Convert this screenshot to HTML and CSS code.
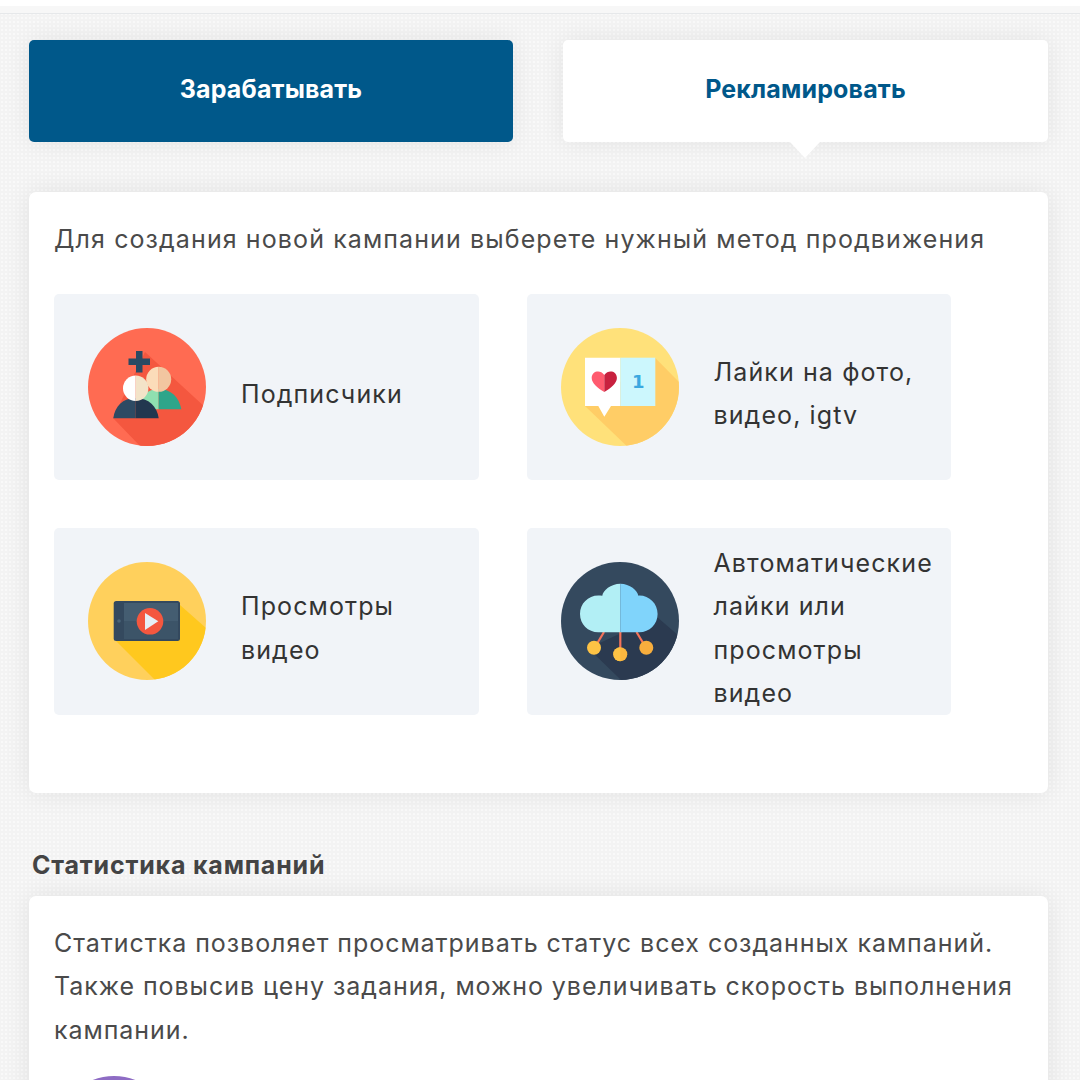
FILE: index.html
```html
<!DOCTYPE html>
<html lang="ru">
<head>
<meta charset="utf-8">
<title>Кампании</title>
<link rel="stylesheet" href="styles.css">
</head>
<body>
<div class="topbar"></div>
<main class="page">
  <nav class="tabs">
    <a class="tab tab-dark">Зарабатывать</a>
    <a class="tab tab-light">Рекламировать</a>
  </nav>
  <section class="card card-methods">
    <p class="lead">Для создания новой кампании выберете нужный метод продвижения</p>
    <div class="tiles">
      <div class="tile">
        <svg class="icon" viewBox="0 0 118 118">
          <defs><clipPath id="c1"><circle cx="59" cy="59" r="59"/></clipPath></defs>
          <circle cx="59" cy="59" r="59" fill="#ff6b52"/>
          <path clip-path="url(#c1)" fill="#f4573f" d="M57 24 L118 80 V118 H52 L25 90Z"/>
          <path fill="#2b4a63" d="M48 23h6.500v7.500h7.500v6.500h-7.500v7.500h-6.500v-7.500h-7.500v-6.500h7.500z"/>
          <path fill="#8fe0b0" d="M70.700 61c-12 0-20 8-22 20.300h22z"/>
          <path fill="#2ea58a" d="M70.700 61c12 0 20.500 8 22.600 20.300H70.700z"/>
          <path fill="#fbdcb9" d="M70.700 38.800a12.500 12.500 0 0 0 0 25z"/>
          <path fill="#f2c6a0" d="M70.700 38.800a12.500 12.500 0 0 1 0 25z"/>
          <path fill="#2d4a63" d="M47.700 70c-13 0-21 8.500-22.400 20.300h22.400z"/>
          <path fill="#22374f" d="M47.700 70c13 0 21.500 8.500 23 20.300h-23z"/>
          <path fill="#fff" d="M47.700 47.600a12.700 12.700 0 0 0 0 25.400z"/>
          <path fill="#f3e3c8" d="M47.700 47.600a12.700 12.700 0 0 1 0 25.400z"/>
        </svg>
        <span class="tile-text">Подписчики</span>
      </div>
      <div class="tile">
        <svg class="icon" viewBox="0 0 118 118">
          <defs><clipPath id="c2"><circle cx="59" cy="59" r="59"/></clipPath></defs>
          <circle cx="59" cy="59" r="59" fill="#ffe17a"/>
          <path clip-path="url(#c2)" fill="#ffcd66" d="M94.300 30 L118 54 V118 H65.700 L24 78Z"/>
          <path fill="#fff" d="M24 29.700h35.300V78H50l-6.700 10.700L37.300 78H24z"/>
          <rect x="59.300" y="29.700" width="35" height="48.300" fill="#ccf7fd"/>
          <path fill="#ff5b6f" d="M43.300 47c-2-3-5-4-7.500-3.500-3.200.6-5.100 3.400-5.100 6.500 0 5 6 10.500 12.600 14z"/>
          <path fill="#c8213f" d="M43.300 47c2-3 5-4 7.500-3.500 3.200.6 5.100 3.400 5.100 6.500 0 5-6 10.500-12.600 14z"/>
          <text class="icon-one" x="71" y="60">1</text>
        </svg>
        <span class="tile-text">Лайки на фото, видео, igtv</span>
      </div>
      <div class="tile">
        <svg class="icon" viewBox="0 0 118 118">
          <defs><clipPath id="c3"><circle cx="59" cy="59" r="59"/></clipPath></defs>
          <circle cx="59" cy="59" r="59" fill="#ffd05c"/>
          <path clip-path="url(#c3)" fill="#ffc81e" d="M92 43 L118 66 V118 H67 L28 79Z"/>
          <rect x="25.700" y="39" width="66.300" height="40" rx="2.500" fill="#34495e"/>
          <rect x="36" y="41" width="54" height="18" fill="#445d71"/>
          <rect x="36" y="59" width="54" height="18" fill="#3c5468"/>
          <circle cx="31" cy="59" r="1.800" fill="#4a6478"/>
          <circle cx="62" cy="59.300" r="13.300" fill="#f4573f"/>
          <path fill="#e6f0f6" d="M57 51l13.300 8.300L57 68z"/>
        </svg>
        <span class="tile-text">Просмотры видео</span>
      </div>
      <div class="tile">
        <svg class="icon" viewBox="0 0 118 118">
          <defs><clipPath id="c4"><circle cx="59" cy="59" r="59"/></clipPath></defs>
          <circle cx="59" cy="59" r="59" fill="#34495e"/>
          <path clip-path="url(#c4)" fill="#2b3a50" d="M95.700 54.700 L118 74 V118 H60 L27.300 86.300Z"/>
          <g stroke="#f5735a" stroke-width="2.200" fill="none">
            <path d="M43 70 34 85"/><path d="M59.300 70v22"/><path d="M75.500 70l9 15"/>
          </g>
          <circle cx="33" cy="85.700" r="7" fill="#fdc345"/>
          <circle cx="59.300" cy="92.300" r="7" fill="#fbb73f"/>
          <circle cx="85.300" cy="85.700" r="7" fill="#f8ae3d"/>
          <path fill="#fdc345" d="M59.300 85.300a7 7 0 0 0 0 14z"/>
          <path fill="#b2eff5" d="M59.300 21.700c-9.500 0-17.400 6.900-18 12-1.200 0-2.700-.1-4-.1C27 33.600 19 41.800 19 52s8 18.300 18.300 18.300h22z"/>
          <path fill="#80d4fb" d="M59.300 21.700c9.500 0 17.400 6.900 18 12 .4 0 .7-.1 1-.1 10.200 0 18.300 8.200 18.300 18.400S88.500 70.300 78.300 70.300h-19z"/>
        </svg>
        <span class="tile-text">Автоматические лайки или просмотры видео</span>
      </div>
    </div>
  </section>
  <h2 class="section-title">Статистика кампаний</h2>
  <section class="card card-stats">
    <p class="stats-text">Статистка позволяет просматривать статус всех созданных кампаний. Также повысив цену задания, можно увеличивать скорость выполнения кампании.</p>
    <div class="stats-icon"></div>
  </section>
</main>
</body>
</html>
```

FILE: styles.css
```css
* { box-sizing: border-box; }
html, body { height: 100%; }
body {
  margin: 0;
  overflow: hidden;
  font-family: "Inter", "Open Sans", sans-serif;
  font-size: 25px;
  line-height: 43.5px;
  letter-spacing: 1px;
  color: #4a4a4a;
  background-color: #f3f3f3;
  background-image:
    radial-gradient(circle at 2px 2px, #f9f9f9 1px, transparent 1.4px);
  background-size: 4px 4px;
}
.topbar {
  height: 14px;
  background: linear-gradient(#fff 0, #fff 6px, #f7f7f7 6px, #f7f7f7 13px, #e6e8ea 13px);
}
.page { padding: 26px 32px 0 29px; }
.tabs {
  display: grid;
  grid-template-columns: 484px 485px;
  gap: 50px;
  margin-bottom: 50.5px;
}
.tab {
  display: flex;
  align-items: center;
  justify-content: center;
  height: 101.5px;
  padding-bottom: 2px;
  border-radius: 5px;
  font-size: 25px;
  font-weight: 700;
  letter-spacing: 0.15px;
  box-shadow: 0 0 26px rgba(0, 0, 0, 0.07);
}
.tab-dark { background: #00588a; color: #fff; }
.tab-light { position: relative; background: #fff; color: #00588a; }
.tab-light::after {
  content: "";
  position: absolute;
  left: 227px;
  top: 100%;
  border-style: solid;
  border-width: 16px 15px 0;
  border-color: #fff transparent transparent;
}
.card {
  background: #fff;
  border-radius: 7px;
  box-shadow: 0 0 26px rgba(0, 0, 0, 0.08);
  padding: 26px 25px 25px;
}
.card-methods { height: 601px; }
.lead { margin: 0 0 32px; white-space: nowrap; letter-spacing: 1.1px; }
.tiles {
  display: grid;
  grid-template-columns: 424.5px 424.5px;
  gap: 48px;
}
.tile {
  display: flex;
  align-items: center;
  gap: 35px;
  height: 186.500px;
  padding: 0 16px 0 34px;
  background: #f1f4f8;
  border-radius: 5px;
  color: #333;
}
.tile-text { padding-top: 15px; letter-spacing: 1.1px; }
.icon { flex: none; width: 118px; height: 118px; }
.icon-one {
  font-family: "DejaVu Sans", sans-serif;
  font-weight: 700;
  font-size: 18px;
  fill: #3ba8e0;
}
.section-title {
  margin: 51px 0 8px 3px;
  font-size: 25px;
  line-height: 43.5px;
  font-weight: 700;
  letter-spacing: 0.8px;
  color: #444;
}
.card-stats { height: 400px; }
.stats-text { margin: 0 0 24px; letter-spacing: 0.95px; }
.stats-icon {
  width: 118px;
  height: 118px;
  margin-left: 1px;
  border-radius: 50%;
  background: #8e6cc4;
}
```
